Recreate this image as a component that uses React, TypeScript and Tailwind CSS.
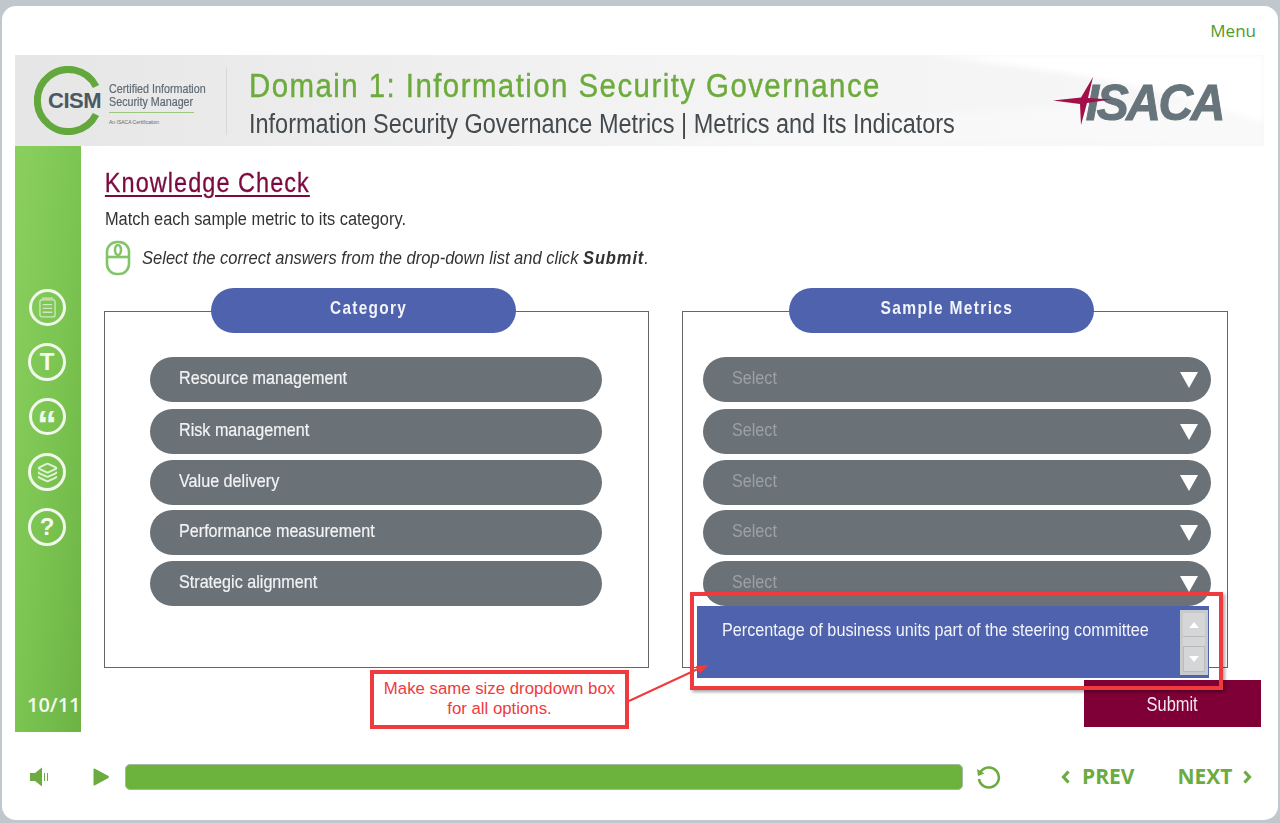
import { Layers } from "lucide-react";

const categories = [
  { label: "Resource management", mt: "mt-[24px]" },
  { label: "Risk management", mt: "mt-[7px]" },
  { label: "Value delivery", mt: "mt-[6px]" },
  { label: "Performance measurement", mt: "mt-[5px]" },
  { label: "Strategic alignment", mt: "mt-[6px]" },
];

const sans = "font-['Liberation_Sans',Arial,sans-serif]";
const open = "font-['Open_Sans',sans-serif]";

function CismLogo() {
  return (
    <div className="flex items-center h-full pl-[19px] w-[211px] relative">
      <div className="relative w-[69px] h-[69px] shrink-0">
        <svg viewBox="0 0 69 69" className="w-[69px] h-[69px]">
          <path d="M62 20.5 A31 31 0 1 0 62 48.5" fill="none" stroke="#62a83c" strokeWidth="7" />
        </svg>
        <span className={`${sans} absolute left-[14px] top-[23px] text-[22px] leading-[24px] font-bold text-[#4b5963] tracking-[-0.5px]`}>
          CISM
        </span>
      </div>
      <div className={`${sans} ml-[6px] w-[98px] text-[#5f6b74] mt-[7px]`}>
        <div className="text-[12px] leading-[13px] whitespace-nowrap origin-left scale-x-[0.895] [-webkit-text-stroke:0.2px]">Certified Information</div>
        <div className="text-[12px] leading-[13px] whitespace-nowrap origin-left scale-x-[0.895] [-webkit-text-stroke:0.2px]">Security Manager</div>
        <div className="h-px bg-[#9cc77f] mt-[3px] w-[85px]" />
        <div className="text-[5px] leading-[7px] mt-[6px] whitespace-nowrap">An ISACA Certification</div>
      </div>
    </div>
  );
}

function IsacaLogo() {
  return (
    <div className="absolute right-[41px] top-[22px] w-[170px] h-[48px]">
      <span className={`${sans} absolute right-0 top-0 text-[50px] leading-[52px] font-bold italic text-[#67747b] tracking-[-2.5px] origin-right scale-x-[0.96] [-webkit-text-stroke:1px]`}>
        ISACA
      </span>
      <svg viewBox="0 0 60 50" className="absolute left-0 top-0 w-[60px] h-[50px]">
        <path d="M0 23.5 L28 20.5 L40 0 L35 21 L58 22.5 L34 26 L28 48 L27 27 Z" fill="#a30f48" />
      </svg>
    </div>
  );
}

function SidebarIcons() {
  return (
    <div className="flex flex-col items-center gap-[17px] pt-[143px] pr-[2px]">
      <div className="w-[37px] h-[37px] rounded-full border-[3px] border-[#f1f8ec] flex items-center justify-center">
        <svg viewBox="0 0 18 22" className="w-[17px] h-[21px]" fill="none" stroke="#cfe9bd" strokeWidth="1.4">
          <rect x="1" y="3" width="16" height="18" rx="2" />
          <path d="M3 1h12M4 8h10M4 12h10M4 16h10" />
        </svg>
      </div>
      <div className="w-[38px] h-[38px] rounded-full border-[3px] border-[#f1f8ec] flex items-center justify-center">
        <span className={`${sans} text-[24px] leading-none font-bold text-[#f5fbf0]`}>T</span>
      </div>
      <div className="w-[37px] h-[37px] rounded-full border-[3px] border-[#f1f8ec] flex items-center justify-center">
        <span className={`${sans} text-[40px] h-[20px] leading-[36px] font-bold text-[#f1f8ec]`}>“</span>
      </div>
      <div className="w-[38px] h-[38px] mt-px rounded-full border-[3px] border-[#f1f8ec] flex items-center justify-center">
        <Layers className="w-[21px] h-[21px] text-[#e2f2d6]" strokeWidth={2.2} />
      </div>
      <div className="w-[38px] h-[38px] rounded-full border-[3px] border-[#f1f8ec] flex items-center justify-center">
        <span className={`${sans} text-[24px] leading-none font-bold text-[#f5fbf0]`}>?</span>
      </div>
    </div>
  );
}

function Chevron({ flip }: { flip?: boolean }) {
  return (
    <svg viewBox="0 0 10 14" className={`w-[10px] h-[14px] ${flip ? "rotate-180" : ""}`}>
      <path d="M7.5 1.5 L2.5 7 L7.5 12.5" fill="none" stroke="#6cab3f" strokeWidth="3.2" />
    </svg>
  );
}

function Footer() {
  return (
    <div className="flex items-center h-[88px] pt-[3px] -mt-[1px]">
      <svg viewBox="0 0 20 20" className="w-[20px] h-[20px] ml-[14px] shrink-0" fill="#6cab3f">
        <path d="M1 6h5l7-5.5v19L6 14H1z" />
        <path d="M15 6h1v8h-1zM18 6h1v8h-1z" />
      </svg>
      <svg viewBox="0 0 16 18" className="w-[16px] h-[18px] ml-[44px] shrink-0" fill="#6cab3f">
        <path d="M0.5 1.5 Q0.5 0 2 0.7 L15.5 8 Q16.3 9 15.5 10 L2 17.3 Q0.5 18 0.5 16.5 Z" />
      </svg>
      <div className="ml-[16px] w-[838px] h-[26px] rounded-[5px] bg-[#6cb33e] border border-[#a9b8a0] shrink-0" />
      <svg viewBox="0 0 26 26" className="w-[26px] h-[26px] ml-[12px] shrink-0" fill="none" stroke="#6cab3f" strokeWidth="2.6">
        <path d="M5.5 8 A10 10 0 1 1 4 15" />
        <path d="M2 5 L3 12 L9.5 9.5 Z" fill="#6cab3f" stroke="none" />
      </svg>
      <div className="ml-[60px] flex items-center gap-[11px]">
        <Chevron />
        <span className={`${open} text-[21px] leading-none font-bold text-[#6cab3f]`}>PREV</span>
      </div>
      <div className="ml-[43px] flex items-center gap-[10px]">
        <span className={`${open} text-[21px] leading-none font-bold text-[#6cab3f]`}>NEXT</span>
        <Chevron flip />
      </div>
    </div>
  );
}

export default function App() {
  return (
    <div className="w-[1280px] h-[823px] bg-[#c0c7cd] pt-[6px] pb-[3px] px-[2px] overflow-hidden">
      <div className="h-full bg-white rounded-[14px] pl-[13px] pr-[14px] flex flex-col">
        <div className={`${open} h-[49px] flex justify-end pt-[13px] pr-[8px] text-[17px] leading-[23px] text-[#4f9a2d]`}>
          Menu
        </div>

        <header className="relative h-[91px] flex bg-gradient-to-r from-[#e6e6e6] via-[#f3f3f3] to-[#f7f7f7] overflow-hidden">
          <svg viewBox="0 0 1249 91" preserveAspectRatio="none" className="absolute inset-0 w-full h-full blur-[3px]">
            <path d="M850 -6 C1000 8 1150 28 1260 72 L1260 -6 Z" fill="#ffffff" />
            <path d="M600 97 C800 60 1000 50 1260 44 L1260 97 Z" fill="#ffffff" fillOpacity="0.3" />
          </svg>
          <div className="relative flex h-full">
            <CismLogo />
            <div className="w-px h-[67px] mt-[13px] bg-[#d8d8d8]" />
            <div className={`${sans} pl-[22px] whitespace-nowrap`}>
              <div className="text-[33px] leading-[38px] mt-[12px] text-[#6cab3c] tracking-[1.6px] origin-left scale-x-[0.893] [-webkit-text-stroke:0.4px]">
                Domain 1: Information Security Governance
              </div>
              <div className="text-[27px] leading-[32px] mt-[3px] text-[#444a4e] origin-left scale-x-[0.87]">
                Information Security Governance Metrics | Metrics and Its Indicators
              </div>
            </div>
          </div>
          <IsacaLogo />
        </header>

        <div className="relative flex h-[586px]">
          <aside className="relative w-[66px] shrink-0 bg-gradient-to-br from-[#8bd05f] via-[#7cc552] to-[#6cb344]">
            <SidebarIcons />
            <div className={`${open} absolute left-[12px] bottom-[14px] text-[20px] leading-[27px] font-semibold text-[#f4faef] whitespace-nowrap`}>
              10/11
            </div>
          </aside>

          <main className={`${sans} flex-1 pl-[23px]`}>
            <h1 className="pt-[21px] pl-px text-[27px] leading-[32px] text-[#7c0a3e] underline underline-offset-[3px] decoration-[2px] tracking-[1.2px] whitespace-nowrap origin-left scale-x-[0.87] [-webkit-text-stroke:0.3px]">
              Knowledge Check
            </h1>
            <p className="mt-[9px] pl-px text-[18px] leading-[22px] text-[#333] whitespace-nowrap origin-left scale-x-[0.91]">
              Match each sample metric to its category.
            </p>
            <div className="flex items-center mt-[9px] h-[38px] pl-px">
              <svg viewBox="0 0 26 36" className="w-[26px] h-[36px] shrink-0" fill="none" stroke="#82c468" strokeWidth="2.6">
                <rect x="2" y="2" width="22" height="32" rx="10" />
                <path d="M2 17h22" />
                <ellipse cx="13" cy="10" rx="3" ry="5" />
              </svg>
              <p className="ml-[11px] text-[19px] leading-[24px] italic text-[#333] whitespace-nowrap origin-left scale-x-[0.87]">
                Select the correct answers from the drop-down list and click <b className="tracking-[1px]">Submit</b>.
              </p>
            </div>

            <div className="grid grid-cols-[545px_546px] gap-[33px] mt-[34px]">
              <section className="h-[357px] border border-[#666]">
                <div className="w-[305px] h-[45px] -mt-[24px] ml-[106px] rounded-full bg-[#4f62ad] flex items-center justify-center pl-[11px] pb-[4px]">
                  <span className="text-[19px] font-bold text-[#f2f4fa] tracking-[1.6px] scale-x-[0.81] whitespace-nowrap">Category</span>
                </div>
                {categories.map((c) => (
                  <div key={c.label} className={`${c.mt} ml-[45px] w-[452px] h-[45px] rounded-full bg-[#6a7278] flex items-center pl-[29px] pb-[3px]`}>
                    <span className="text-[19px] text-[#f2f3f4] whitespace-nowrap origin-left scale-x-[0.85] [-webkit-text-stroke:0.2px]">{c.label}</span>
                  </div>
                ))}
              </section>

              <section className="relative h-[357px] border border-[#666]">
                <div className="w-[305px] h-[45px] -mt-[24px] ml-[106px] rounded-full bg-[#4f62ad] flex items-center justify-center pl-[11px] pb-[4px]">
                  <span className="text-[19px] font-bold text-[#f2f4fa] tracking-[1.6px] scale-x-[0.82] whitespace-nowrap">Sample Metrics</span>
                </div>
                {categories.map((c) => (
                  <div key={c.label} className={`${c.mt} ml-[20px] w-[508px] h-[45px] rounded-full bg-[#6a7278] flex items-center justify-between pl-[29px] pr-[13px] pb-[3px]`}>
                    <span className="text-[19px] text-[#9ba1a5] whitespace-nowrap origin-left scale-x-[0.85]">Select</span>
                    <svg viewBox="0 0 18 16" className="w-[18px] h-[16px] mt-[3px]">
                      <path d="M0 0h18L9 16z" fill="#ffffff" />
                    </svg>
                  </div>
                ))}

                {/* open list */}
                <div className="absolute left-[14px] top-[294px] w-[512px] h-[72px] bg-[#4f62ad] pl-[25px] pt-[13px]">
                  <span className="block text-[18px] leading-[22px] text-[#f2f4fa] whitespace-nowrap origin-left scale-x-[0.9]">
                    Percentage of business units part of the steering committee
                  </span>
                  <div className="absolute right-[1px] top-[4px] w-[28px] h-[65px] bg-[#d4d6d8] border-[3px] border-[#c8cacc] flex flex-col justify-between">
                    <div className="h-[24px] border-b border-[#b8babc] flex items-center justify-center">
                      <svg viewBox="0 0 10 6" className="w-[10px] h-[6px]"><path d="M5 0l5 6H0z" fill="#fff" /></svg>
                    </div>
                    <div className="h-[26px] border border-[#b8babc] flex items-center justify-center">
                      <svg viewBox="0 0 10 6" className="w-[10px] h-[6px]"><path d="M5 6l5-6H0z" fill="#fff" /></svg>
                    </div>
                  </div>
                </div>
              </section>
            </div>

            <div className="flex justify-end pr-[3px] mt-[12px]">
              <div className="w-[177px] h-[47px] bg-[#7f0037] flex items-center justify-center">
                <span className="text-[20px] text-[#f5e9ee] scale-x-[0.82]">Submit</span>
              </div>
            </div>
          </main>

          {/* review annotations */}
          <div className="absolute left-[675px] top-[446px] w-[533px] h-[98px] border-[4px] border-[#ef3a3e] shadow-[2px_2px_3px_rgba(0,0,0,0.35)]" />
          <div className="absolute left-[355px] top-[524px] w-[259px] h-[59px] border-[4px] border-[#ef3a3e] bg-white flex items-center justify-center text-center font-['Liberation_Sans',Arial,sans-serif] text-[16.8px] leading-[20px] text-[#ef3a3e]">
            <span className="pb-[2px]">
              Make same size dropdown box
              <br />
              for all options.
            </span>
          </div>
          <svg viewBox="0 0 100 50" className="absolute left-[597px] top-[514px] w-[100px] h-[50px]">
            <path d="M17 41 L88 8" stroke="#ef3a3e" strokeWidth="2" />
            <path d="M96 5 L84 6 L88 14 Z" fill="#ef3a3e" />
          </svg>
        </div>

        <Footer />
      </div>
    </div>
  );
}
